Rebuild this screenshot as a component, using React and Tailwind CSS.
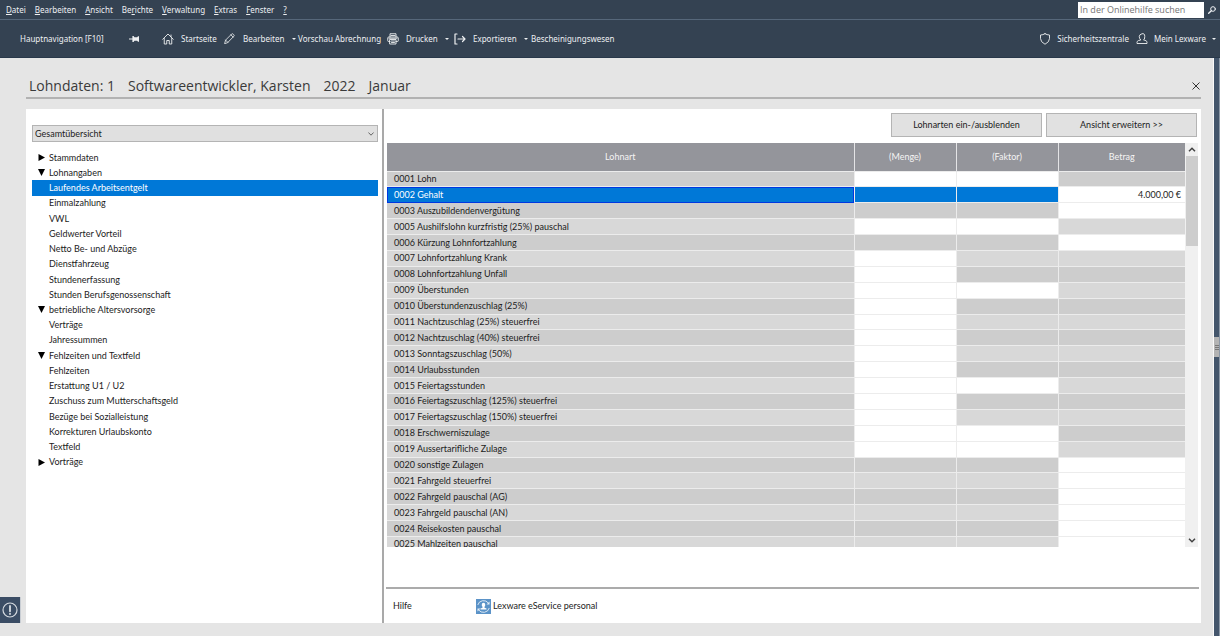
import React from "react";

const menu = [
  ["", "D", "atei"],
  ["", "B", "earbeiten"],
  ["", "A", "nsicht"],
  ["Be", "r", "ichte"],
  ["", "V", "erwaltung"],
  ["", "E", "xtras"],
  ["", "F", "enster"],
  ["", "?", ""],
];

const tree = [
  ["Stammdaten", "closed"],
  ["Lohnangaben", "open"],
  ["Laufendes Arbeitsentgelt"],
  ["Einmalzahlung"],
  ["VWL"],
  ["Geldwerter Vorteil"],
  ["Netto Be- und Abzüge"],
  ["Dienstfahrzeug"],
  ["Stundenerfassung"],
  ["Stunden Berufsgenossenschaft"],
  ["betriebliche Altersvorsorge", "open"],
  ["Verträge"],
  ["Jahressummen"],
  ["Fehlzeiten und Textfeld", "open"],
  ["Fehlzeiten"],
  ["Erstattung U1 / U2"],
  ["Zuschuss zum Mutterschaftsgeld"],
  ["Bezüge bei Sozialleistung"],
  ["Korrekturen Urlaubskonto"],
  ["Textfeld"],
  ["Vorträge", "closed"],
];

// Third entry: editable cells among Menge (m), Faktor (f), Betrag (b)
const rows = [
  ["0001", "Lohn", "mf"],
  ["0002", "Gehalt", "b", "4.000,00 €"],
  ["0003", "Auszubildendenvergütung", "b"],
  ["0005", "Aushilfslohn kurzfristig (25%) pauschal", "mf"],
  ["0006", "Kürzung Lohnfortzahlung", "b"],
  ["0007", "Lohnfortzahlung Krank", "m"],
  ["0008", "Lohnfortzahlung Unfall", "m"],
  ["0009", "Überstunden", "mf"],
  ["0010", "Überstundenzuschlag (25%)", "m"],
  ["0011", "Nachtzuschlag (25%) steuerfrei", "m"],
  ["0012", "Nachtzuschlag (40%) steuerfrei", "m"],
  ["0013", "Sonntagszuschlag (50%)", "m"],
  ["0014", "Urlaubsstunden", "m"],
  ["0015", "Feiertagsstunden", "mf"],
  ["0016", "Feiertagszuschlag (125%) steuerfrei", "m"],
  ["0017", "Feiertagszuschlag (150%) steuerfrei", "m"],
  ["0018", "Erschwerniszulage", "mf"],
  ["0019", "Aussertarifliche Zulage", "mf"],
  ["0020", "sonstige Zulagen", "b"],
  ["0021", "Fahrgeld steuerfrei", "b"],
  ["0022", "Fahrgeld pauschal (AG)", "b"],
  ["0023", "Fahrgeld pauschal (AN)", "b"],
  ["0024", "Reisekosten pauschal", "b"],
  ["0025", "Mahlzeiten pauschal", "b"],
];

function Icon({ children, className = "size-3" }) {
  return (
    <svg
      viewBox="0 0 24 24"
      className={className + " shrink-0"}
      fill="none"
      stroke="currentColor"
      strokeWidth="1.8"
      strokeLinecap="round"
      strokeLinejoin="round"
      aria-hidden="true"
    >
      {children}
    </svg>
  );
}

function Caret() {
  return (
    <svg viewBox="0 0 4 2" className="h-[2px] w-1 shrink-0" fill="currentColor" aria-hidden="true">
      <path d="M0 0h4L2 2z" />
    </svg>
  );
}

function MenuBar() {
  return (
    <div className="flex h-5 items-center justify-between border-b border-[#56677a]">
      <nav className="flex gap-[9px] pl-[6px]">
        {menu.map(([a, b, c]) => (
          <button key={a + b + c} type="button">
            {a}
            <span className="underline underline-offset-1">{b}</span>
            {c}
          </button>
        ))}
      </nav>
      <form className="flex items-center gap-1 pr-1" onSubmit={(e) => e.preventDefault()}>
        <input
          type="search"
          aria-label="In der Onlinehilfe suchen"
          placeholder="In der Onlinehilfe suchen"
          className="h-4 w-[126px] bg-white px-[2px] font-['Open_Sans',sans-serif] text-[9px] text-black placeholder:text-[#757575]"
        />
        <button type="submit" aria-label="Suchen">
          <Icon className="size-2">
            <circle cx="15" cy="9" r="7" strokeWidth="3" />
            <path d="M10 14l-8 8" strokeWidth="4" />
          </Icon>
        </button>
      </form>
    </div>
  );
}

function ToolBar() {
  return (
    <div className="flex h-[38px] items-center justify-between border-b border-[#28384a]">
      <div className="flex items-center whitespace-nowrap">
        <button type="button" className="ml-5 w-[109px] text-left">
          Hauptnavigation [F10]
        </button>
        <button type="button" aria-label="Navigation anheften" className="w-[33px]">
          <svg viewBox="0 0 10 6" className="h-[6px] w-[10px]" fill="currentColor" aria-hidden="true">
            <path d="M0 2.6h3.4V0h1.2l.8 1.3h2.8L9 .3h1v5.4H9l-.8-1H5.4L4.600 6H3.400V3.400H0z" />
          </svg>
        </button>
        <button type="button" className="flex w-[62px] items-center gap-[7px]">
          <Icon>
            <path d="M1.500 12.500L12 2l10.500 10.500" />
            <path d="M18 4v3.500M4.500 11v11H9.500v-7h5v7h5V11" />
          </Icon>
          Startseite
        </button>
        <button type="button" className="flex w-[68px] items-center gap-2">
          <Icon className="size-[11px]">
            <path d="M1.500 22.500l2-7L17 2q1.500-1 3 .500l1.500 1.500q1.500 1.500 0 3L8.500 20.500zM15 4l5 5M3.500 15.500l5 5" />
          </Icon>
          <span className="flex-1 text-left">Bearbeiten</span>
          <Caret />
        </button>
        <button type="button" className="ml-[6px] w-[89px] text-left">
          Vorschau Abrechnung
        </button>
        <button type="button" className="flex w-[59px] items-center gap-[7px]">
          <Icon>
            <path d="M6 8V1.500h12V8M6 17H3q-1.500 0-1.500-1.500V10Q1.500 8 3.500 8h17q2 0 2 2v5.500Q22.500 17 21 17h-3M6 13h12v9H6zM4 10.500h16M9 16h6M9 19h6M8 5h8" />
          </Icon>
          <span className="flex-1 text-left">Drucken</span>
          <Caret />
        </button>
        <button type="button" className="ml-2 flex w-[71px] items-center gap-[7px]">
          <Icon>
            <path d="M6 2H2v20h4M8 12h14M17 7l5 5-5 5" strokeWidth="2.400" />
          </Icon>
          <span className="flex-1 text-left">Exportieren</span>
          <Caret />
        </button>
        <button type="button" className="ml-[6px]">
          Bescheinigungswesen
        </button>
      </div>
      <div className="flex items-center gap-[7px] pr-1">
        <button type="button" className="flex items-center gap-[6px]">
          <Icon>
            <path d="M12 1.500q4 2.500 9 2.500v7q0 7-9 11.500Q3 18 3 11V4q5 0 9-2.500z" />
          </Icon>
          Sicherheitszentrale
        </button>
        <button type="button" className="flex items-center gap-[6px]">
          <Icon>
            <path d="M9 13.500Q6.500 11 6.500 7t5.500-5.500T17.500 7 15 13.500l5 2q2 1 2 3V21H2v-2.500q0-2 2-3z" />
          </Icon>
          Mein Lexware
          <Caret />
        </button>
      </div>
    </div>
  );
}

function Sidebar() {
  return (
    <aside className="w-[358px] shrink-0 border-r-2 border-[#a9a9a9] pt-4 pr-1 pl-[6px]">
      <div className="relative">
        <select
          aria-label="Ansicht"
          className="block h-[17px] w-full appearance-none border border-[#b4b4b4] bg-[#e0e0e0] px-[2px]"
        >
          <option>Gesamtübersicht</option>
        </select>
        <svg
          viewBox="0 0 6 4"
          className="pointer-events-none absolute top-[7px] right-1 h-1 w-[6px]"
          fill="none"
          stroke="#444"
          strokeWidth=".8"
          aria-hidden="true"
        >
          <path d="M.4.500L3 3.200 5.600.5" />
        </svg>
      </div>
      <ul className="mt-2 grid h-[320px] auto-rows-fr">
        {tree.map(([label, state]) => (
          <li key={label} className="min-h-0">
            <button
              type="button"
              aria-expanded={state ? state === "open" : undefined}
              className={
                "flex h-full w-full items-center gap-1 pl-[6px] text-left leading-3 " +
                (label === "Laufendes Arbeitsentgelt" ? "bg-[#0078d7] text-white" : "")
              }
            >
              <svg viewBox="0 0 7 7" className="size-[7px] shrink-0" aria-hidden="true">
                {state === "open" && <path d="M0 0h7L3.500 7z" />}
                {state === "closed" && <path d="M.5 0L7 3.500.5 7z" />}
              </svg>
              {label}
            </button>
          </li>
        ))}
      </ul>
    </aside>
  );
}

function WageTable() {
  return (
    <div className="flex h-[404px] pr-[3px] pl-[3px]">
      <div className="min-w-0 flex-1 overflow-hidden">
        <table className="h-[409px] w-full table-fixed border-collapse leading-3">
          <colgroup>
            <col />
            <col className="w-[102px]" />
            <col className="w-[102px]" />
            <col className="w-[127px]" />
          </colgroup>
          <thead>
            <tr className="h-7 bg-[#94959b] text-[#f4f4f4]">
              {["Lohnart", "(Menge)", "(Faktor)", "Betrag"].map((h) => (
                <th key={h} scope="col" className="border-r border-[#e4e4e6] font-normal last:border-r-0">
                  {h}
                </th>
              ))}
            </tr>
          </thead>
          <tbody>
            {rows.map(([nr, name, open, amount], i) => {
              const selected = nr === "0002";
              const shade = i % 2 ? "bg-[#d8d8d8]" : "bg-[#cdcdcd]";
              const base = "border-t border-[#ececec] p-0 ";
              return (
                <tr key={nr}>
                  <td
                    className={
                      base +
                      "border-r pl-[7px] " +
                      (selected ? "bg-[#0078d7] text-white outline-1 -outline-offset-1 outline-[#0038e0]" : shade)
                    }
                  >
                    {nr} {name}
                  </td>
                  {["m", "f"].map((c) => (
                    <td
                      key={c}
                      className={
                        base + "border-r " + (selected ? "bg-[#0078d7]" : open.includes(c) ? "bg-white" : shade)
                      }
                    />
                  ))}
                  <td className={base + "text-right " + (open.includes("b") ? "bg-white" : shade)}>
                    <span className="pr-1">{amount}</span>
                  </td>
                </tr>
              );
            })}
          </tbody>
        </table>
      </div>
      <div className="flex w-[13px] flex-col bg-[#f0f0f0] pl-px">
        <button type="button" aria-label="Nach oben" className="grid h-[13px] place-items-center">
          <svg viewBox="0 0 8 5" className="h-[5px] w-2" fill="none" stroke="#444" strokeWidth="1.500">
            <path d="M1 4.200L4 1.200l3 3" />
          </svg>
        </button>
        <div className="h-[90px] bg-[#cdcdcd]" />
        <div className="flex-1" />
        <button type="button" aria-label="Nach unten" className="grid h-[13px] place-items-center">
          <svg viewBox="0 0 8 5" className="h-[5px] w-2" fill="none" stroke="#444" strokeWidth="1.500">
            <path d="M1 .8l3 3 3-3" />
          </svg>
        </button>
      </div>
    </div>
  );
}

function Content() {
  const btn = "h-6 w-[151px] border border-[#b4b4b4] bg-[#e1e1e1]";
  return (
    <section className="flex min-w-0 flex-1 flex-col">
      <div className="flex justify-end gap-1 pt-1 pr-1 pb-[6px]">
        <button type="button" className={btn}>
          Lohnarten ein-/ausblenden
        </button>
        <button type="button" className={btn}>
          Ansicht erweitern &gt;&gt;
        </button>
      </div>
      <WageTable />
      <footer className="mt-auto mr-[2px] ml-[2px] flex h-9 items-center border-t-2 border-[#ababab] pl-[7px]">
        <a href="#hilfe" className="w-[83px]">
          Hilfe
        </a>
        <a href="#eservice" className="flex items-center gap-[2px]">
          <svg viewBox="0 0 30 30" className="size-[15px]" fill="none" aria-hidden="true">
            <path d="M0 0h30v30H0z" fill="#5b93c8" />
            <path
              d="M3.500 12A12 12 0 0 1 25 8.500M26.500 18A12 12 0 0 1 5 21.500"
              stroke="#e6eff7"
              strokeWidth="1.800"
            />
            <path d="M27 5v6h-6zM3 25v-6h6z" fill="#e6eff7" />
            <path d="M15 7.500q3.500 0 3.500 4 0 2.500-1.500 4v2l4 1.500V21H9v-2l4-1.500v-2q-1.500-1.500-1.500-4 0-4 3.500-4z" fill="#fff" />
          </svg>
          Lexware eService personal
        </a>
      </footer>
    </section>
  );
}

export default function App() {
  return (
    <div className="flex min-h-screen flex-col bg-[#e5e5e5] font-['Lato','Open_Sans',sans-serif] text-[9px] text-[#1c1c1c]">
      <header className="bg-[#344252] font-['Noto_Sans',sans-serif] text-[8px] text-[#eef0f2]">
        <MenuBar />
        <ToolBar />
      </header>
      <div className="flex flex-1">
        <div className="flex w-[26px] shrink-0 flex-col justify-end pb-[13px]">
          <button
            type="button"
            aria-label="Hinweise"
            className="grid h-[26px] w-[21px] place-items-center border-r border-[#c9ced4] bg-[#3b4d65] text-[#d5dae0]"
          >
            <Icon className="size-4">
              <circle cx="12" cy="12" r="10.500" />
              <path d="M12 6v8M12 17.500v.5" strokeWidth="2.800" />
            </Icon>
          </button>
        </div>
        <main className="flex min-w-0 flex-1 flex-col pb-[13px]">
          <div className="flex h-[41px] items-end justify-between border-b-2 border-[#b2b2b2] pr-px pb-px pl-[3px]">
            <h1 className="flex gap-[13px] font-['Open_Sans',sans-serif] text-[14px] leading-5 text-[#3a3a3a]">
              <span>Lohndaten: 1</span>
              <span>Softwareentwickler, Karsten</span>
              <span>2022</span>
              <span>Januar</span>
            </h1>
            <button type="button" aria-label="Schließen" className="pb-[6px]">
              <svg viewBox="0 0 8 8" className="size-2" stroke="#333" strokeWidth="1">
                <path d="M.5.500l7 7M7.500.5l-7 7" />
              </svg>
            </button>
          </div>
          <div className="mt-[10px] flex flex-1 bg-white">
            <Sidebar />
            <Content />
          </div>
        </main>
        <div className="w-3 shrink-0" />
        <div className="flex w-[7px] shrink-0 flex-col border-r border-l border-r-[#8c98a6] border-l-[#fafafa] bg-[#44566c]">
          <div className="mt-[279px] grid h-5 place-content-center gap-px bg-[#b4b4b4]">
            <i className="h-px w-1 bg-[#777]" />
            <i className="h-px w-1 bg-[#777]" />
            <i className="h-px w-1 bg-[#777]" />
          </div>
        </div>
      </div>
    </div>
  );
}
